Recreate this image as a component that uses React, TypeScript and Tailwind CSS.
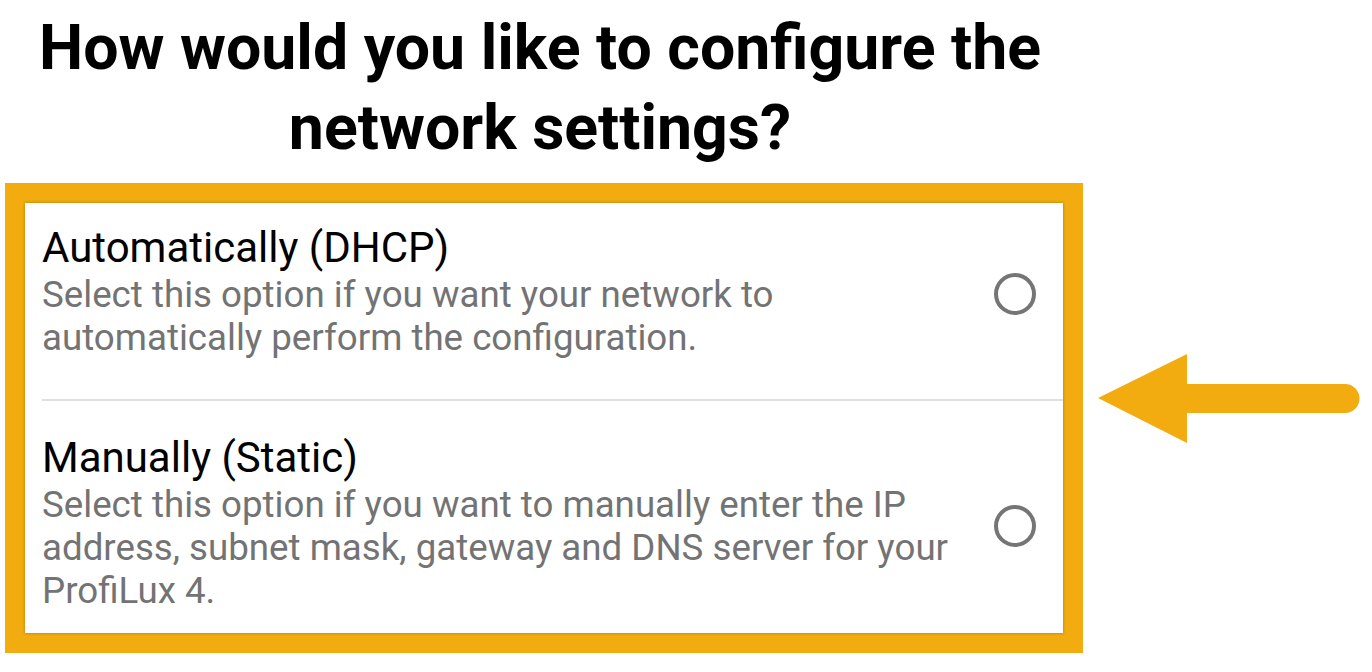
export default function App() {
  const options = [
    {
      title: "Automatically (DHCP)",
      desc: "Select this option if you want your network to automatically perform the configuration.",
      pad: "pb-[40px] pt-[20px]",
    },
    {
      title: "Manually (Static)",
      desc: "Select this option if you want to manually enter the IP address, subnet mask, gateway and DNS server for your ProfiLux 4.",
      pad: "pb-[21px] pt-[32px]",
    },
  ];

  return (
    <div className="flex min-h-screen bg-white pl-[5px] font-['Roboto',sans-serif]">
      <div className="w-[1078px]">
        <h1 className="pr-2 pt-[8px] text-center text-[62.6px] font-bold leading-[80px] text-black">
          How would you like to configure the network settings?
        </h1>
        <div className="mt-[15px] border-[20px] border-[#f2ac10]">
          <div className="bg-white shadow-[0_0_3px_rgba(0,0,0,0.3)]">
            {options.map((o, i) => (
              <div key={o.title}>
                {i > 0 && <div className="ml-[17px] h-[2px] bg-[#e0e0e0]" />}
                <div className={`flex items-center justify-between pl-[17px] pr-[27px] ${o.pad}`}>
                  <div className="w-[935px]">
                    <div className="text-[42px] leading-[50px] text-black">{o.title}</div>
                    <div className="text-[36.7px] leading-[43px] text-[#737373]">{o.desc}</div>
                  </div>
                  <div className="mt-[6px] h-[42px] w-[42px] rounded-full border-[4px] border-[#757575]" />
                </div>
              </div>
            ))}
          </div>
        </div>
      </div>
      <div className="ml-[15px] mt-[352px]">
        <svg width="262" height="94" viewBox="0 0 262 94">
          <path d="M0 46 L89 2 L89 32 L247 32 A14.5 14.5 0 0 1 247 61 L89 61 L89 91 Z" fill="#f2ac10" />
        </svg>
      </div>
    </div>
  );
}
